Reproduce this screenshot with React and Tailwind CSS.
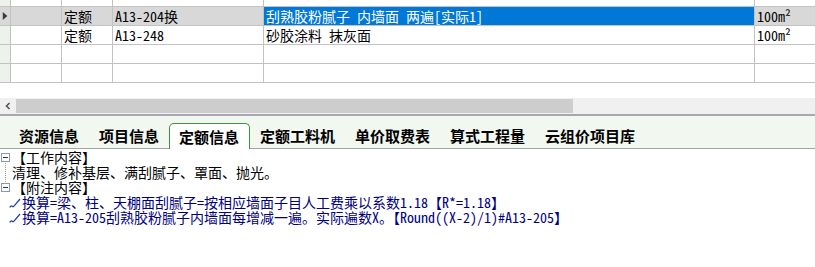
import React from "react";

const F = "font-['Noto_Sans_Mono_CJK_SC','Noto_Sans_CJK_SC',sans-serif]";

function Cells({ h, header, selected, cells, blue }) {
  const widths = ["w-[51px]", "w-[51px]", "w-[151px]", "w-[491px]"];
  return (
    <div className={`flex border-b border-[#c2c2c2] ${h}`}>
      <div
        className={`w-[11px] shrink-0 border-r border-[#c2c2c2] flex items-center ${
          selected ? "bg-[#d8d8d8]" : "bg-[#eef2ec]"
        }`}
      >
        {header && (
          <svg width="10" height="12" viewBox="0 0 10 12" className="ml-[1px]">
            <path d="M2 1.5 L7 6 L2 10.5 Z" fill="#3a3a3a" />
          </svg>
        )}
      </div>
      {widths.map((w, i) => (
        <div
          key={i}
          className={`${w} shrink-0 border-r border-[#c2c2c2] pl-[2px] leading-[18px] whitespace-nowrap overflow-hidden ${
            blue && i === 3 ? "bg-[#0078d7] text-white" : selected ? "bg-[#d8d8d8]" : ""
          }`}
        >
          {cells ? cells[i] : ""}
        </div>
      ))}
      <div
        className={`flex-1 pl-[2px] leading-[18px] whitespace-nowrap ${
          selected ? "bg-[#d8d8d8]" : ""
        }`}
      >
        {cells ? cells[4] : ""}
      </div>
    </div>
  );
}

function Box({ className = "" }) {
  return (
    <div
      className={`w-[9px] h-[9px] border border-[#8a9aaa] bg-white flex items-center justify-center ${className}`}
    >
      <div className="w-[5px] h-[1px] bg-[#1c3a70]" />
    </div>
  );
}

function Check() {
  return (
    <svg width="12" height="12" viewBox="0 0 12 12" className="mr-[1px] shrink-0">
      <path d="M0.8 10.5 Q2 8 3.5 9.5 Q4.2 10.2 5 9 L11 2" fill="none" stroke="#1a3cb0" strokeWidth="1.2" />
    </svg>
  );
}

export default function App() {
  const tabs = ["资源信息", "项目信息", "定额信息", "定额工料机", "单价取费表", "算式工程量", "云组价项目库"];
  return (
    <div className={`w-[815px] h-[267px] bg-white text-black text-[14px] overflow-hidden ${F}`}>
      {/* grid */}
      <div className="flex flex-col">
        <Cells h="h-[7px]" />
        <Cells
          h="h-[19px]"
          header
          selected
          blue
          cells={["", "定额", "A13-204换", "刮熟胶粉腻子 内墙面 两遍[实际1]", "100m²"]}
        />
        <Cells h="h-[19px]" cells={["", "定额", "A13-248", "砂胶涂料 抹灰面", "100m²"]} />
        <Cells h="h-[19px]" />
        <Cells h="h-[19px]" />
      </div>
      <div className="h-[15px]" />
      {/* scrollbar */}
      <div className="flex h-[16px] bg-[#f0f0f0]">
        <div className="w-[16px] flex items-center justify-center">
          <svg width="8" height="8" viewBox="0 0 8 8">
            <path d="M5.5 1 L2.5 4 L5.5 7" fill="none" stroke="#555" strokeWidth="1.6" />
          </svg>
        </div>
        <div className="w-[557px] bg-[#cdcdcd] my-[1px]" />
        <div className="flex-1" />
      </div>
      <div className="h-[2px] bg-[#a9a7b4]" />
      {/* tabs */}
      <div className="h-[33px] bg-[#f2f7f0] border-b border-[#a5a5a5] flex items-end pl-[9px]">
        {tabs.map((t, i) => (
          <div
            key={t}
            className={`h-[25px] flex items-center text-[15px] font-bold leading-none whitespace-nowrap ${
              i === 2
                ? "bg-white border border-b-0 border-[#3a963a] rounded-t-[5px] pl-[9px] pr-[10px] mb-[-1px] h-[26px]"
                : "px-[10px]"
            }`}
          >
            {t}
          </div>
        ))}
      </div>
      {/* content */}
      <div className="relative pt-[1px] leading-[15px] text-[14px]">
        <div className="absolute left-[5px] top-[14px] h-[19px] border-l border-dotted border-[#9a9a9a]" />
        <div className="flex items-center h-[15px]">
          <Box className="ml-[1px] mr-[2px]" />
          <span>【工作内容】</span>
        </div>
        <div className="h-[15px] pl-[12px] whitespace-nowrap">清理、修补基层、满刮腻子、罩面、抛光。</div>
        <div className="flex items-center h-[15px]">
          <Box className="ml-[1px] mr-[2px]" />
          <span>【附注内容】</span>
        </div>
        <div className="flex items-center h-[15px] pl-[9px] text-[#00007f] whitespace-nowrap">
          <Check />
          <span>换算=梁、柱、天棚面刮腻子=按相应墙面子目人工费乘以系数1.18【R*=1.18】</span>
        </div>
        <div className="flex items-center h-[15px] pl-[9px] text-[#00007f] whitespace-nowrap">
          <Check />
          <span>换算=A13-205刮熟胶粉腻子内墙面每增减一遍。实际遍数X。【Round((X-2)/1)#A13-205】</span>
        </div>
      </div>
    </div>
  );
}
